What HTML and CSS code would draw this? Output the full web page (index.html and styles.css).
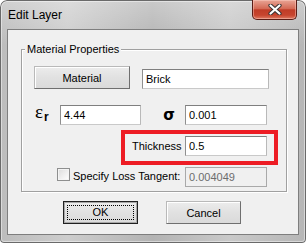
FILE: index.html
```html
<!DOCTYPE html>
<html lang="en">
<head>
    <meta charset="UTF-8">
    <meta name="viewport" content="width=device-width, initial-scale=1.0">
    <title>Edit Layer</title>
    <link rel="stylesheet" href="styles.css">
</head>
<body>
    <div class="window">
        <div class="titlebar">
            <span class="title">Edit Layer</span>
            <div class="close">
                <svg width="14" height="11" viewBox="0 0 14 11">
                    <path d="M2.5 1.5 L11.5 9.5 M11.5 1.5 L2.5 9.5" stroke="#3b3434" stroke-width="4.2" stroke-linecap="round"/>
                    <path d="M2.5 1.5 L11.5 9.5 M11.5 1.5 L2.5 9.5" stroke="#ffffff" stroke-width="2.2" stroke-linecap="round"/>
                </svg>
            </div>
        </div>
        <div class="client">
            <div class="group">
                <span class="legend">Material Properties</span>
                <div class="row row-material">
                    <button type="button" class="btn btn-material">Material</button>
                    <input type="text" class="field field-name" value="Brick">
                </div>
                <div class="row row-eps">
                    <span class="eps">&#949;<span class="sub">r</span></span>
                    <input type="text" class="field field-eps" value="4.44">
                    <span class="sigma">&#963;</span>
                    <input type="text" class="field field-val" value="0.001">
                </div>
                <div class="row row-thick">
                    <label class="lbl-thick">Thickness</label>
                    <input type="text" class="field field-val" value="0.5">
                </div>
                <div class="row row-loss">
                    <span class="check"></span>
                    <label class="lbl-loss">Specify Loss Tangent:</label>
                    <input type="text" class="field field-val" value="0.004049" disabled>
                </div>
            </div>
            <div class="actions">
                <button type="button" class="btn btn-ok"><span class="focus">OK</span></button>
                <button type="button" class="btn btn-cancel">Cancel</button>
            </div>
        </div>
    </div>
</body>
</html>
```

FILE: styles.css
```css
body {
    margin: 0;
    background-color: #ffffff;
    font-family: "Liberation Sans", Arial, sans-serif;
    font-size: 11px;
    color: #000000;
}
.window {
    width: 306px;
    height: 243px;
    box-sizing: border-box;
    display: flex;
    flex-direction: column;
    border-radius: 7px 7px 4px 4px;
    background:
        linear-gradient(to bottom, rgba(255, 255, 255, 0.3), rgba(255, 255, 255, 0) 45px),
        linear-gradient(to right, #bcbcbc 0%, #cdcdcd 22%, #b3b3b3 50%, #c9c9c9 75%, #b6b6b6 100%);
    box-shadow: inset 0 0 0 1px #6a6a6a, inset 0 0 0 2px rgba(255, 255, 255, 0.45);
}
.titlebar {
    height: 29px;
    flex-shrink: 0;
    display: flex;
    justify-content: space-between;
    align-items: flex-start;
}
.title {
    margin: 8px 0 0 8px;
    font-size: 12px;
    line-height: 15px;
}
.close {
    width: 45px;
    height: 20px;
    margin-right: 9px;
    box-sizing: border-box;
    border: 1px solid #5a1d16;
    border-top: none;
    border-radius: 0 0 5px 5px;
    background: linear-gradient(to bottom, #e9a595 0%, #d46a55 45%, #c03c27 52%, #c7452e 80%, #de7a63 100%);
    box-shadow: inset 0 0 0 1px rgba(255, 210, 200, 0.45);
    display: flex;
    align-items: center;
    justify-content: center;
}
.client {
    flex: 1;
    margin: 0 7px 8px 7px;
    background-color: #f0f0f0;
    border: 1px solid #7e7e7e;
    display: flex;
    flex-direction: column;
    align-items: flex-start;
}
.group {
    position: relative;
    margin: 19px 0 0 13px;
    width: 266px;
    height: 143px;
    box-sizing: border-box;
    padding-top: 16px;
    border: 1px solid #a0a0a0;
    box-shadow: 1px 1px 0 #ffffff, inset 1px 1px 0 #ffffff;
}
.legend {
    position: absolute;
    top: -8px;
    left: 3px;
    padding: 0 2px;
    line-height: 14px;
    background-color: #f0f0f0;
}
.row {
    display: flex;
    align-items: center;
}
.field {
    box-sizing: border-box;
    height: 20px;
    margin: 0;
    padding: 0 3px;
    font-family: inherit;
    font-size: 11px;
    color: #000000;
    background-color: #ffffff;
    border: 1px solid;
    border-color: #7f7f7f #b9b9b9 #c9c9c9 #8f8f8f;
    outline: none;
}
.field:disabled {
    background-color: #f0f0f0;
    color: #6d6d6d;
    border-color: #a9a9a9;
}
.field-name {
    width: 127px;
}
.field-eps {
    width: 81px;
}
.field-val {
    width: 82px;
}
.btn {
    box-sizing: border-box;
    height: 23px;
    margin: 0;
    padding: 0;
    font-family: inherit;
    font-size: 11px;
    color: #000000;
    background: linear-gradient(to bottom, #ececec, #e1e1e1 50%, #dadada);
    border: 1px solid;
    border-color: #b9b9b9 #6f6f6f #6f6f6f #b9b9b9;
    box-shadow: inset 1px 1px 0 #ffffff;
}
.row-material {
    align-items: flex-end;
    margin-left: 12px;
    gap: 12px;
}
.btn-material {
    width: 96px;
}
.row-eps {
    margin: 13px 0 0 13px;
}
.eps {
    width: 25px;
    font-family: "Liberation Serif", serif;
    font-size: 19px;
    line-height: 20px;
}
.sub {
    font-family: "Liberation Sans", Arial, sans-serif;
    font-size: 12px;
    font-weight: bold;
    vertical-align: -3px;
    margin-left: 1px;
}
.sigma {
    width: 44px;
    box-sizing: border-box;
    padding-right: 10px;
    text-align: right;
    font-family: "DejaVu Sans", sans-serif;
    font-size: 15px;
    font-weight: bold;
}
.row-thick {
    margin: 3px 0 0 99px;
    width: 157px;
    box-sizing: border-box;
    padding: 2px 7px 5px 7px;
    border: 4px solid #ed1c24;
}
.lbl-thick {
    width: 53px;
}
.row-loss {
    align-items: flex-start;
    margin: 2px 0 0 35px;
}
.check {
    width: 13px;
    height: 13px;
    box-sizing: border-box;
    margin: 1px 3px 0 0;
    border: 1px solid #8e8f8f;
    background: linear-gradient(to bottom right, #dcdcdc, #ffffff);
    box-shadow: inset 0 0 0 1px #f4f4f4;
}
.lbl-loss {
    width: 112px;
    line-height: 18px;
}
.actions {
    display: flex;
    gap: 28px;
    margin: 9px 0 0 55px;
}
.btn-ok, .btn-cancel {
    width: 75px;
}
.btn-ok {
    padding: 3px;
    border-color: #202020;
    box-shadow: inset 0 0 0 1px #a8a8a8;
}
.focus {
    display: block;
    height: 100%;
    box-sizing: border-box;
    border: 1px dotted #000000;
    line-height: 13px;
}
```
